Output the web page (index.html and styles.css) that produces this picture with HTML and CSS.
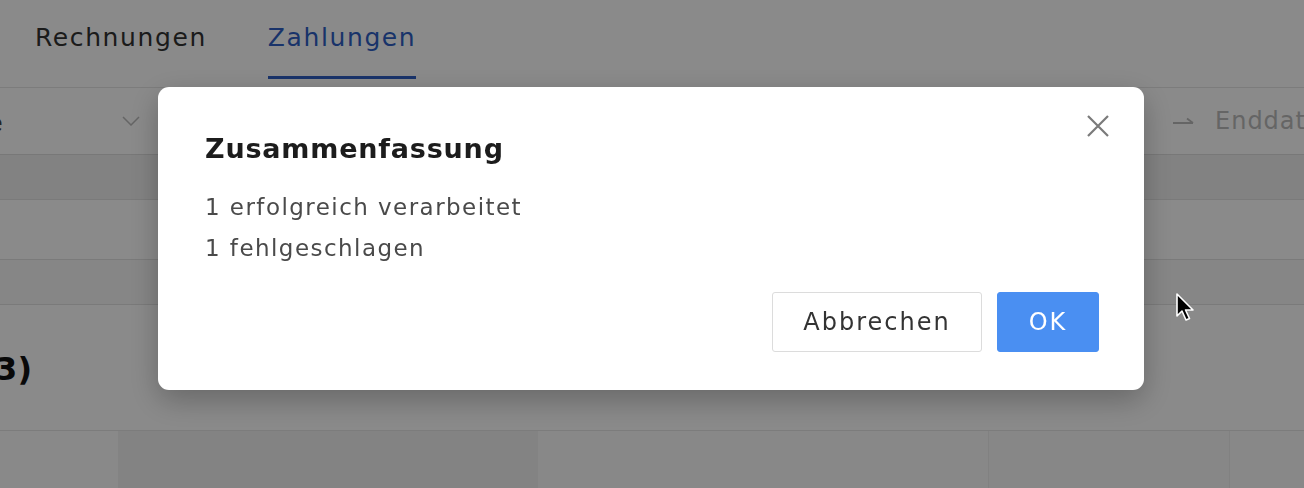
FILE: index.html
```html
<!DOCTYPE html>
<html>
  <head>
    <title>Zahlungen</title>
    <link rel="stylesheet" href="styles.css">
  </head>
  <body>
  <div id="page">
    <div class="tabs">
      <span class="tab">Rechnungen</span>
      <span class="tab active">Zahlungen</span>
    </div>
    <div class="filters">
      <div class="select">
        <span class="select-value">Alle</span>
        <svg class="chevron" width="18" height="10" viewBox="0 0 18 10"><path d="M1 1 L9 9 L17 1" fill="none" stroke="#bbb" stroke-width="1.5"/></svg>
      </div>
      <div class="range">
        <svg class="arrow" width="23" height="10" viewBox="0 0 23 10"><path d="M1 6 L21 6 M15 1.5 L21 6" fill="none" stroke="#bbb" stroke-width="1.8"/></svg>
        <span class="placeholder">Enddatum</span>
      </div>
    </div>
    <div class="row head"></div>
    <div class="row"></div>
    <div class="row alt"></div>
    <div class="section">
      <h2 class="section-title">Zahlungen (3)</h2>
    </div>
    <div class="table-head">
      <div class="col c1"></div>
      <div class="col c2"></div>
      <div class="col c3"></div>
      <div class="col c4"></div>
      <div class="col c5"></div>
    </div>
  </div>

  <div id="overlay"></div>

  <div id="dialog">
    <div class="dialog-head">
      <span class="dialog-title">Zusammenfassung</span>
      <svg class="close" width="24" height="24" viewBox="0 0 24 24"><path d="M2 2 L22 22 M22 2 L2 22" stroke="#7a7a7a" stroke-width="2.2"/></svg>
    </div>
    <div class="dialog-body">
      <p>1 erfolgreich verarbeitet</p>
      <p>1 fehlgeschlagen</p>
    </div>
    <div class="dialog-foot">
      <button class="btn">Abbrechen</button>
      <button class="btn primary">OK</button>
    </div>
  </div>

  <svg id="cursor" width="22" height="30" viewBox="0 0 22 30"><path d="M2 2 L2 24 L7 19 L11 28 L14.5 26.5 L10.5 18 L18 18 Z" fill="#000" stroke="#fff" stroke-width="1.6" stroke-linejoin="round"/></svg>
  </body>
</html>
```
FILE: styles.css
```css
body {
  margin: 0;
  background: white;
  font-family: "DejaVu Sans", sans-serif;
  overflow: hidden;
  }
#page {
  width: 1304px;
  height: 488px;
  overflow: hidden;
  }
.tabs {
  display: flex;
  gap: 61px;
  padding-left: 35px;
  height: 88px;
  border-bottom: 1px solid #e6e6e6;
  box-sizing: border-box;
  }
.tab {
  font-size: 25px;
  letter-spacing: 1.6px;
  line-height: 30px;
  color: #333;
  padding-top: 23px;
  height: 79px;
  box-sizing: border-box;
  }
.tab.active {
  color: #2f5fc4;
  border-bottom: 3px solid #2f5fc4;
  }
.filters {
  display: flex;
  height: 67px;
  border-bottom: 1px solid #dedede;
  box-sizing: border-box;
  }
.select {
  display: flex;
  align-items: center;
  width: 198px;
  margin-left: -40px;
  flex: none;
  padding-top: 4px;
  }
.select-value {
  font-size: 23px;
  color: #444;
  flex: 1;
  }
.chevron {
  margin-right: 18px;
  margin-top: -4px;
  }
.range {
  display: flex;
  align-items: center;
  gap: 20px;
  margin-left: auto;
  flex: 0 0 132px;
  min-width: 0;
  white-space: nowrap;
  font-size: 24px;
  letter-spacing: 1px;
  color: #bbb;
  }
.arrow {
  flex: none;
  margin-top: 2px;
  }
.row {
  height: 60px;
  border-bottom: 1px solid #e2e2e2;
  box-sizing: border-box;
  }
.row.head {
  height: 45px;
  background: #f1f1f1;
  }
.row.alt {
  height: 45px;
  background: #f7f7f7;
  }
.section {
  height: 125px;
  width: 32px;
  display: flex;
  justify-content: flex-end;
  align-items: center;
  }
.section-title {
  margin: 0;
  flex: none;
  white-space: nowrap;
  font-size: 32px;
  color: #111;
  padding-top: 2px;
  }
.table-head {
  display: flex;
  height: 58px;
  border-top: 1px solid #e6e6e6;
  }
.col {
  height: 100%;
  }
.c1 { width: 118px; background: #fdfdfd; }
.c2 { width: 420px; background: #f3f3f3; }
.c3 { width: 450px; background: #fcfcfc; }
.c4 { width: 240px; background: #f9f9f9; border-left: 1px solid #efefef; }
.c5 { flex: 1; background: #fcfcfc; border-left: 1px solid #efefef; }

#overlay {
  position: fixed;
  top: 0;
  left: 0;
  right: 0;
  bottom: 0;
  background: rgba(0,0,0,0.46);
  }
#dialog {
  position: fixed;
  top: 87px;
  left: 158px;
  width: 986px;
  height: 303px;
  background: white;
  border-radius: 11px;
  box-shadow: 0 10px 30px rgba(0,0,0,0.26);
  box-sizing: border-box;
  padding: 36px 45px 38px 47px;
  display: flex;
  flex-direction: column;
  }
.dialog-head {
  display: flex;
  justify-content: space-between;
  align-items: flex-start;
  }
.dialog-title {
  font-size: 27px;
  letter-spacing: 0.8px;
  font-weight: bold;
  color: #1c1c1c;
  margin-top: 10px;
  }
.close {
  margin-top: -9px;
  margin-right: -11px;
  }
.dialog-body {
  margin-top: 28px;
  flex: 1;
  }
.dialog-body p {
  margin: 0 0 10px 0;
  font-size: 23px;
  letter-spacing: 1.45px;
  color: #4a4a4a;
  line-height: 31px;
  }
.dialog-foot {
  display: flex;
  justify-content: flex-end;
  gap: 15px;
  }
.btn {
  font-family: "DejaVu Sans", sans-serif;
  font-size: 24px;
  letter-spacing: 2px;
  height: 60px;
  border-radius: 3px;
  border: 1px solid #dcdcdc;
  background: white;
  color: #333;
  padding: 0;
  width: 210px;
  }
.btn.primary {
  width: 102px;
  background: #4a8ff2;
  border-color: #4a8ff2;
  color: white;
  }
#cursor {
  position: fixed;
  top: 292px;
  left: 1175px;
  }
```
